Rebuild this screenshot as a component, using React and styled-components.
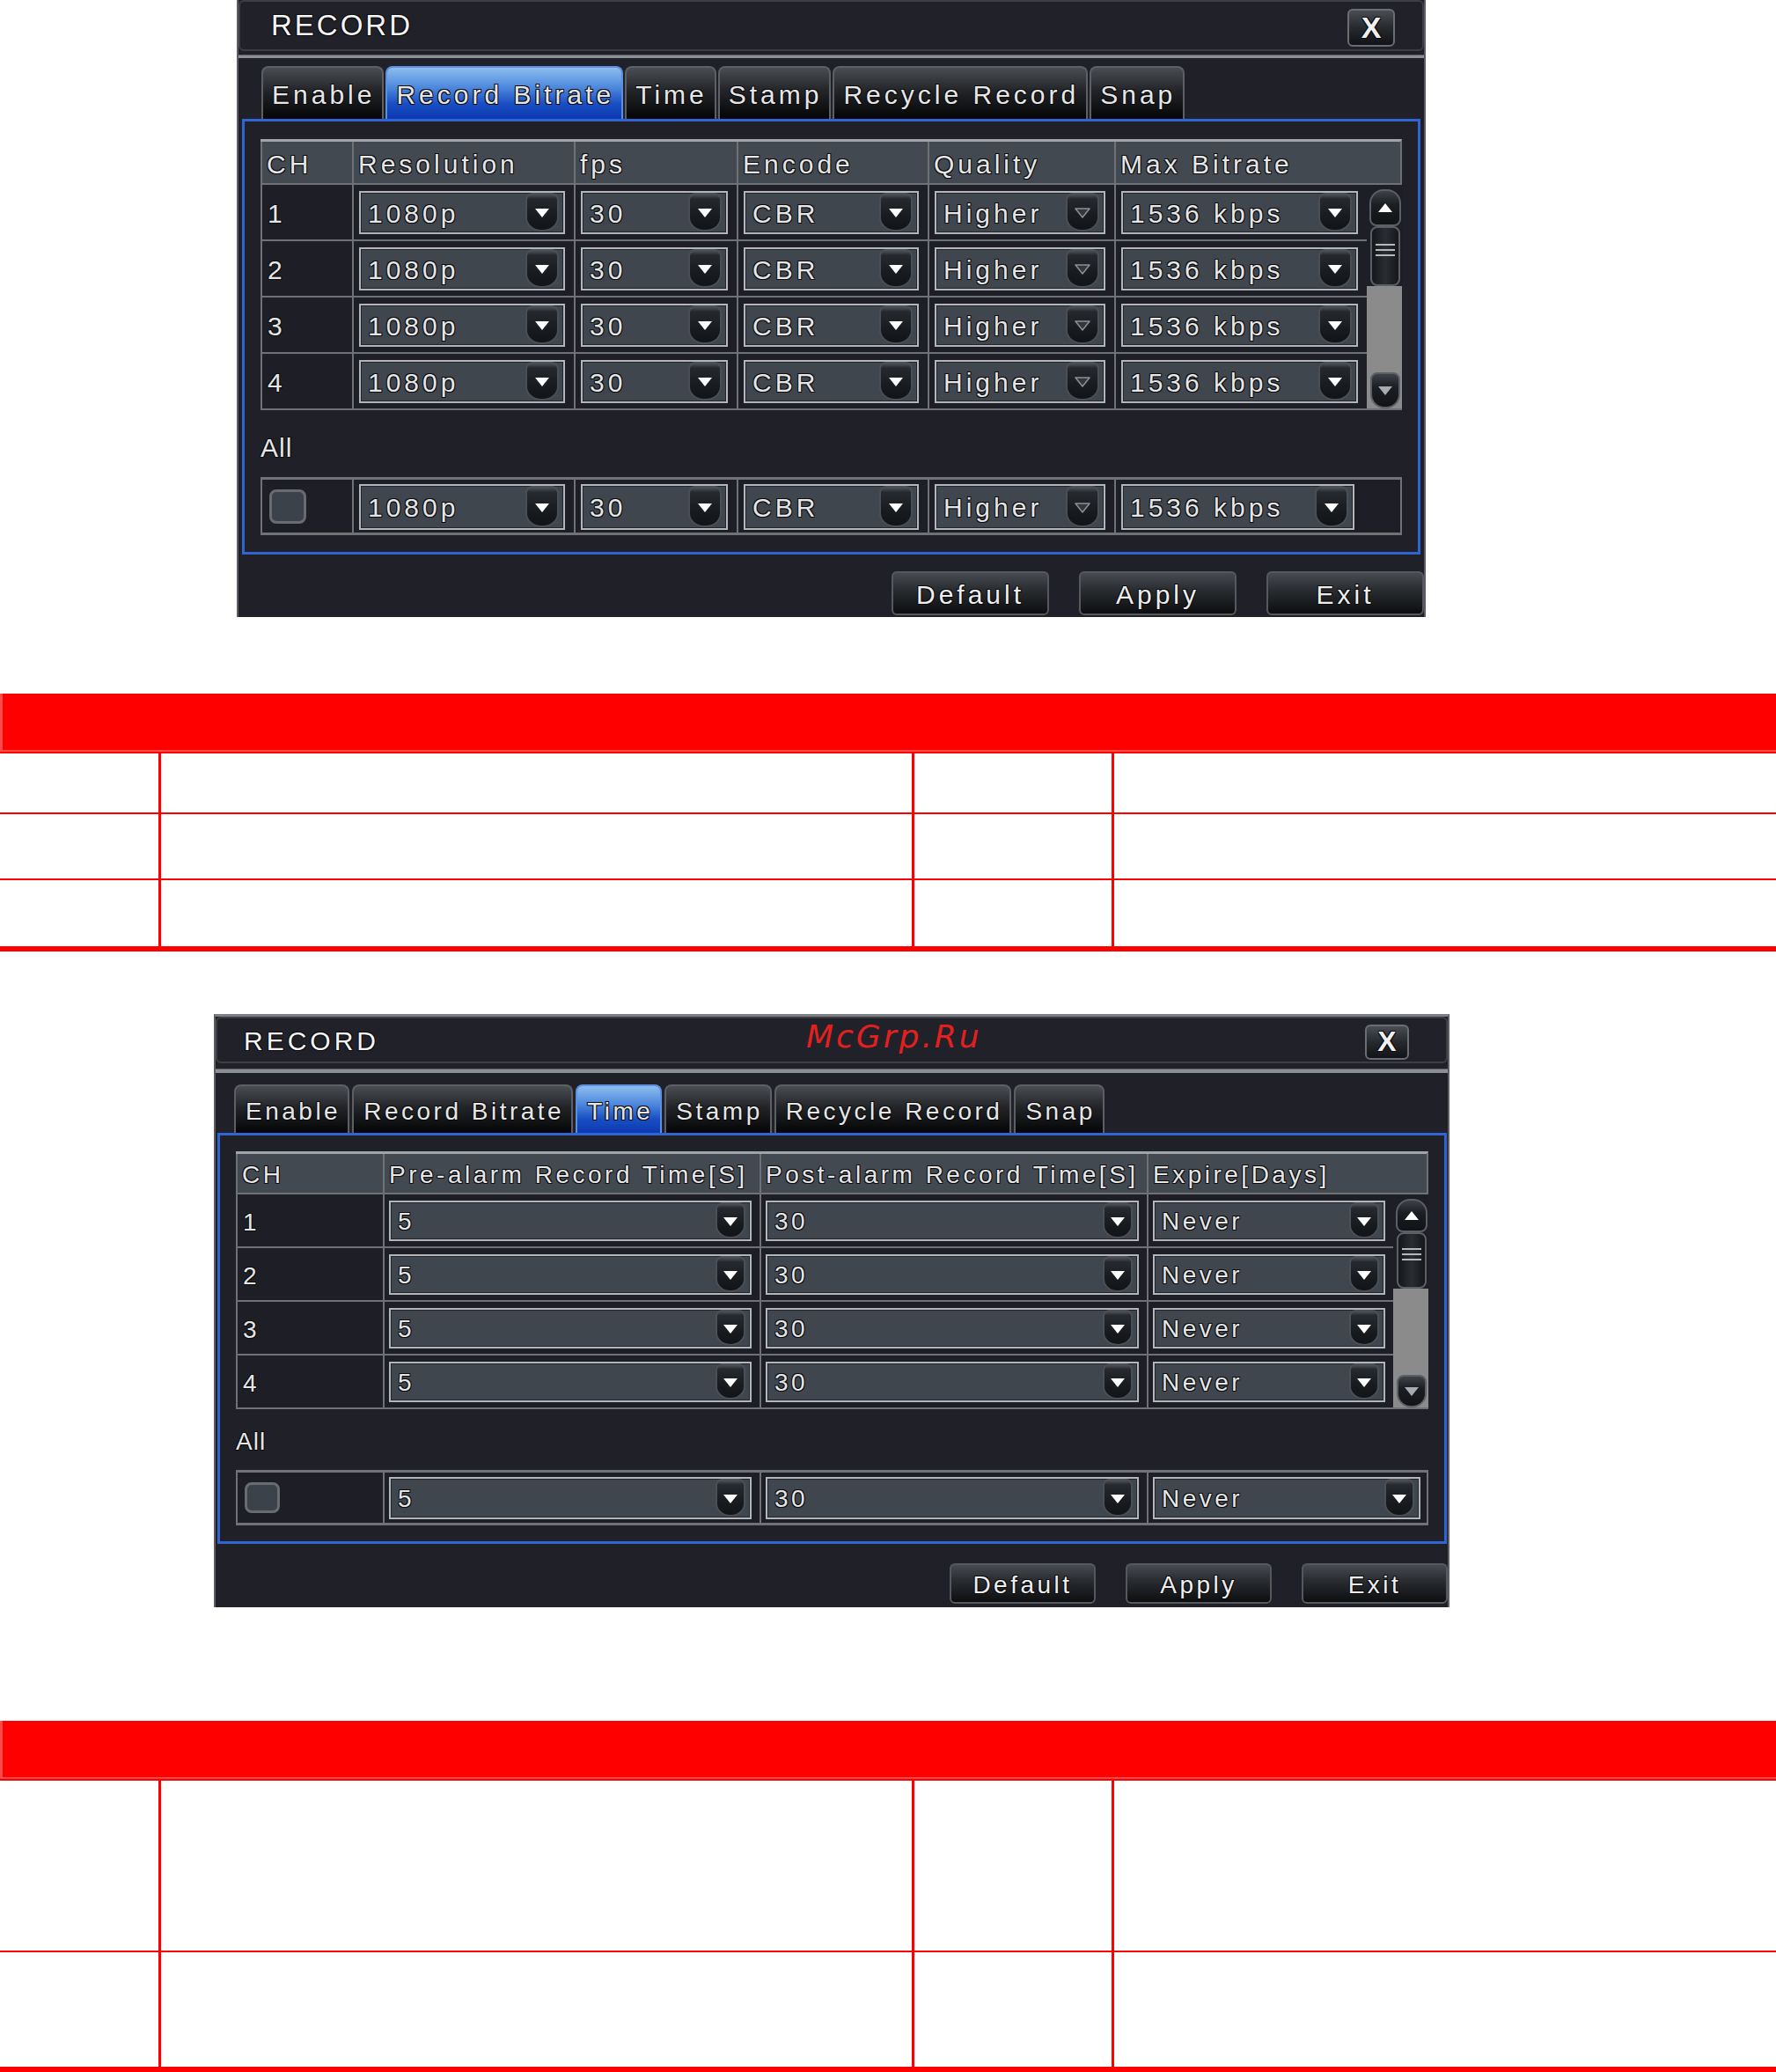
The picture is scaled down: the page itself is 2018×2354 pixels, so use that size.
import React from 'react';
import styled, { createGlobalStyle } from 'styled-components';

const GlobalStyle = createGlobalStyle`
  html, body {
    margin: 0;
    padding: 0;
    background: #ffffff;
  }
  body {
    width: 2018px;
    font-family: "Liberation Sans", Arial, sans-serif;
  }
`;

const D1 = {
  left: 269, width: 1351, height: 701, mt: 0, bt: 0,
  titleH: 58, titleFs: 33, titleLs: 3, titlePad: 35, titlePt: 0,
  closeW: 54, closeH: 43, closeMr: 31, closeFs: 34,
  sepGap: 4, sepH: 4, stripPad: 9, tabPl: 26, tabH: 60, tabPad: '4px 8px 0 10px', tabGap: 2,
  fs: 30, ls: 4,
  frameH: 495, frameMl: 4, frameMr: 4, padT: 20, padX: 18,
  headH: 50, rowH: 64, cols: [104, 252, 185, 217, 212, 327], scrollW: 40,
  cellPad: '7px 10px 6px 6px', allPad: '5px 10px 3px 6px', allLastPr: 54,
  dropW: 38,
  labelMt: 23, labelLh: 40, allMt: 13, allH: 66, chkW: 42, chkH: 39,
  upMt: 5, upH: 42, thumbH: 68, downH: 41,
  footPt: 19, btnW: 179, btnH: 50, btnGap: 34,
};

const D2 = {
  left: 243, width: 1404, height: 674, mt: 71, bt: 3,
  titleH: 53, titleFs: 30, titleLs: 4, titlePad: 30, titlePt: 3,
  closeW: 50, closeH: 40, closeMr: 42, closeFs: 32,
  sepGap: 6, sepH: 5, stripPad: 13, tabPl: 21, tabH: 55, tabPad: '4px 8px 0 11px', tabGap: 3,
  fs: 28, ls: 3.5,
  frameH: 467, frameMl: 2, frameMr: 1, padT: 18, padX: 18,
  headH: 47, rowH: 61, cols: [167, 428, 440, 320], scrollW: 40,
  cellPad: '7px 9px 6px 5px', allPad: '5px 9px 4px 5px', allLastPr: 9,
  dropW: 34,
  labelMt: 18, labelLh: 38, allMt: 13, allH: 63, chkW: 40, chkH: 35,
  upMt: 5, upH: 38, thumbH: 64, downH: 37,
  footPt: 22, btnW: 166, btnH: 46, btnGap: 34,
};

const Page = styled.div`
  width: 2018px;
  display: flex;
  flex-direction: column;
  background: #ffffff;
`;

/* ---------- DVR dialog ---------- */

const Dialog = styled.div`
  position: relative;
  box-sizing: border-box;
  width: ${({ $c }) => $c.width}px;
  height: ${({ $c }) => $c.height}px;
  margin-left: ${({ $c }) => $c.left}px;
  margin-top: ${({ $c }) => $c.mt}px;
  background: #1f2028;
  border-left: 2px solid #5b5d62;
  border-right: 2px solid #5b5d62;
  border-top: ${({ $c }) => $c.bt}px solid #7d8085;
  display: flex;
  flex-direction: column;
  color: #e6e6e6;
  font-family: "Liberation Sans", Arial, sans-serif;
  font-size: ${({ $c }) => $c.fs}px;
  letter-spacing: ${({ $c }) => $c.ls}px;
  text-shadow: -1px -1px 0 #0c0c0e, 1px -1px 0 #0c0c0e, -1px 1px 0 #0c0c0e, 1px 1px 0 #0c0c0e;
`;

const TitleBar = styled.div`
  position: relative;
  box-sizing: border-box;
  height: ${({ $c }) => $c.titleH}px;
  display: flex;
  align-items: center;
  justify-content: space-between;
  padding-left: ${({ $c }) => $c.titlePad}px;
  padding-right: ${({ $c }) => $c.closeMr}px;
  background: #212229;
  border: 2px solid #3c3e44;
  border-radius: 6px;
`;

const TitleText = styled.span`
  font-size: ${({ $c }) => $c.titleFs}px;
  letter-spacing: ${({ $c }) => $c.titleLs}px;
  padding-top: ${({ $c }) => $c.titlePt}px;
  color: #f4f4f4;
`;

const Watermark = styled.span`
  position: absolute;
  left: 669px;
  top: 0;
  font-family: "DejaVu Sans", "Liberation Sans", sans-serif;
  font-style: italic;
  font-size: 36px;
  letter-spacing: 3px;
  color: #e3201f;
  text-shadow: none;
`;

const CloseButton = styled.div`
  box-sizing: border-box;
  width: ${({ $c }) => $c.closeW}px;
  height: ${({ $c }) => $c.closeH}px;
  margin-top: 4px;
  display: flex;
  align-items: center;
  justify-content: center;
  border: 2px solid #6a6d72;
  border-radius: 6px;
  background: linear-gradient(#4a4e54, #26292d 50%, #121316);
  font-size: ${({ $c }) => $c.closeFs}px;
  font-weight: bold;
  letter-spacing: 0;
  color: #f0f0f0;
`;

const Separator = styled.div`
  margin-top: ${({ $c }) => $c.sepGap}px;
  height: ${({ $c }) => $c.sepH}px;
  background: #8a8f94;
  border-top: 1px solid #5c6065;
  box-sizing: border-box;
`;

const TabStrip = styled.div`
  display: flex;
  align-items: flex-end;
  gap: ${({ $c }) => $c.tabGap}px;
  padding-top: ${({ $c }) => $c.stripPad}px;
  padding-left: ${({ $c }) => $c.tabPl}px;
`;

const Tab = styled.div`
  box-sizing: border-box;
  height: ${({ $c }) => $c.tabH}px;
  display: flex;
  align-items: center;
  padding: ${({ $c }) => $c.tabPad};
  border: 2px solid ${({ $active }) => ($active ? '#5d8fdc' : '#5c5f64')};
  border-bottom: none;
  border-radius: 8px 8px 0 0;
  background: ${({ $active }) =>
    $active
      ? 'linear-gradient(#8dbdee, #4b86dc 40%, #1a4fc4 70%, #0c38b0)'
      : 'linear-gradient(#4a4d52, #222428 45%, #050506)'};
  white-space: nowrap;
`;

const Frame = styled.div`
  box-sizing: border-box;
  height: ${({ $c }) => $c.frameH}px;
  margin: 0 ${({ $c }) => $c.frameMr}px 0 ${({ $c }) => $c.frameMl}px;
  border: 3px solid #2f64d2;
  padding: ${({ $c }) => $c.padT}px ${({ $c }) => $c.padX}px 0;
  display: flex;
  flex-direction: column;
`;

/* ---------- settings table ---------- */

const HeaderRow = styled.div`
  box-sizing: border-box;
  height: ${({ $c }) => $c.headH}px;
  display: grid;
  grid-template-columns: ${({ $cols }) => $cols.map((w) => `${w}px`).join(' ')};
  background: #424951;
  border-top: 3px solid #9ea4a9;
  border-right: 2px solid #6f7275;
`;

const HeaderCell = styled.div`
  display: flex;
  align-items: center;
  padding: 4px 0 0 5px;
  border-left: 2px solid #6f7275;
  white-space: nowrap;
  overflow: hidden;
`;

const Body = styled.div`
  display: flex;
  border-bottom: 2px solid #6f7275;
`;

const Rows = styled.div`
  display: flex;
  flex-direction: column;
`;

const Row = styled.div`
  box-sizing: border-box;
  height: ${({ $c }) => $c.rowH}px;
  display: grid;
  grid-template-columns: ${({ $cols }) => $cols.map((w) => `${w}px`).join(' ')};
  border-top: 2px solid #6f7275;
  background: #1e1f26;
`;

const Cell = styled.div`
  box-sizing: border-box;
  border-left: 2px solid #6f7275;
  padding: ${({ $pad }) => $pad};
  padding-right: ${({ $pr }) => ($pr !== undefined ? `${$pr}px` : undefined)};
  display: flex;
  align-items: center;
  min-width: 0;
`;

const ChCell = styled(Cell)`
  padding: 4px 0 0 6px;
`;

const Select = styled.div`
  box-sizing: border-box;
  width: 100%;
  height: 100%;
  display: flex;
  align-items: flex-start;
  justify-content: space-between;
  background: #3f464e;
  border: 2px solid #b3b6b9;
  box-shadow: inset 0 0 0 1px #22252a;
  padding-left: 8px;
  padding-right: 5px;
`;

const SelectText = styled.span`
  align-self: center;
  padding-top: 2px;
  white-space: nowrap;
`;

const DropButton = styled.span`
  box-sizing: border-box;
  width: ${({ $c }) => $c.dropW}px;
  height: calc(100% - 1px);
  display: flex;
  align-items: center;
  justify-content: center;
  padding-top: 2px;
  background: linear-gradient(#4c5157 0%, #262a2f 12%, #181b1f 60%, #121417);
  border: 2px solid #4a4f55;
  border-radius: 8px 8px 18px 18px / 8px 8px 16px 16px;
`;

const TriSvg = styled.svg`
  display: block;
`;

const Triangle = ({ dir = 'down', fill = '#ffffff', stroke = 'none' }) => (
  <TriSvg width="18" height="12" viewBox="0 0 18 12">
    <polygon
      points={dir === 'up' ? '9,1 17,11 1,11' : '1,1 17,1 9,11'}
      fill={fill}
      stroke={stroke}
      strokeWidth="1.5"
      strokeLinejoin="round"
    />
  </TriSvg>
);

const SelectBox = ({ c, value, dim }) => (
  <Select>
    <SelectText>{value}</SelectText>
    <DropButton $c={c}>
      {dim ? <Triangle fill="#33383d" stroke="#8d9094" /> : <Triangle />}
    </DropButton>
  </Select>
);

/* scrollbar */

const ScrollCol = styled.div`
  width: ${({ $c }) => $c.scrollW}px;
  display: flex;
  flex-direction: column;
  border-top: 2px solid #6f7275;
  background: #1e1f26;
`;

const ScrollUp = styled.div`
  box-sizing: border-box;
  width: 36px;
  height: ${({ $c }) => $c.upH}px;
  margin: ${({ $c }) => $c.upMt}px 0 0 3px;
  display: flex;
  align-items: center;
  justify-content: center;
  border: 2px solid #5c6066;
  border-radius: 16px 16px 8px 8px;
  background: linear-gradient(#3e4248, #1b1e22 40%, #111316);
`;

const ScrollThumb = styled.div`
  box-sizing: border-box;
  width: 34px;
  height: ${({ $c }) => $c.thumbH}px;
  margin-left: 4px;
  display: flex;
  flex-direction: column;
  align-items: center;
  justify-content: center;
  gap: 4px;
  padding-bottom: 14px;
  border: 2px solid #5c6066;
  border-radius: 8px;
  background: linear-gradient(90deg, #15171a, #2a2e33 50%, #15171a);
`;

const ThumbLine = styled.span`
  width: 22px;
  height: 2px;
  background: #b6b9bc;
`;

const ScrollTrack = styled.div`
  flex: 1;
  display: flex;
  flex-direction: column;
  justify-content: flex-end;
  background: #8b8b8b;
`;

const ScrollDown = styled.div`
  box-sizing: border-box;
  width: 34px;
  height: ${({ $c }) => $c.downH}px;
  margin-left: 4px;
  display: flex;
  align-items: center;
  justify-content: center;
  border: 2px solid #5c6066;
  border-radius: 8px 8px 16px 16px;
  background: linear-gradient(#3e4248, #1b1e22 40%, #111316);
`;

/* "All" block */

const AllLabel = styled.div`
  margin-top: ${({ $c }) => $c.labelMt}px;
  line-height: ${({ $c }) => $c.labelLh}px;
  letter-spacing: 1px;
`;

const AllRow = styled.div`
  box-sizing: border-box;
  margin-top: ${({ $c }) => $c.allMt}px;
  height: ${({ $c }) => $c.allH}px;
  display: grid;
  grid-template-columns: ${({ $cols }) => $cols.map((w) => `${w}px`).join(' ')};
  background: #1e1f26;
  border-top: 3px solid #707376;
  border-bottom: 3px solid #707376;
  border-right: 2px solid #707376;
`;

const Checkbox = styled.span`
  box-sizing: border-box;
  width: ${({ $c }) => $c.chkW}px;
  height: ${({ $c }) => $c.chkH}px;
  margin-left: 4px;
  border: 3px solid #686c70;
  border-radius: 8px;
  background: #3b4249;
`;

/* footer */

const Footer = styled.div`
  flex: 1;
  display: flex;
  justify-content: flex-end;
  align-items: flex-start;
  gap: ${({ $c }) => $c.btnGap}px;
  padding-top: ${({ $c }) => $c.footPt}px;
`;

const ActionButton = styled.div`
  box-sizing: border-box;
  width: ${({ $c }) => $c.btnW}px;
  height: ${({ $c }) => $c.btnH}px;
  display: flex;
  align-items: center;
  justify-content: center;
  padding-top: 3px;
  border: 2px solid #55595e;
  border-radius: 6px;
  background: linear-gradient(#474b51, #2a2d31 40%, #0d0e10);
  color: #eeeeee;
`;

/* ---------- red description tables ---------- */

const SpecTable = styled.div`
  margin-top: ${({ $mt }) => $mt}px;
  width: 2018px;
  display: grid;
  grid-template-columns: 180px 853px 224px 752px;
  grid-template-rows: ${({ $rows }) => $rows.map((h) => `${h}px`).join(' ')};
  column-gap: 3px;
  row-gap: 2px;
  background: #ff0000;
  border-bottom: 6px solid #ff0000;
`;

const SpecHead = styled.div`
  grid-column: 1 / -1;
  background: #ff0000;
  box-shadow: inset 3px -2px 0 #ff4a4a;
`;

const SpecCell = styled.div`
  background: #ffffff;
`;

const RecordDialog = ({ c, active, headers, values, dims, watermark }) => {
  const bodyCols = [...c.cols.slice(0, -1), c.cols[c.cols.length - 1] - c.scrollW];
  const tabs = ['Enable', 'Record Bitrate', 'Time', 'Stamp', 'Recycle Record', 'Snap'];
  const last = values.length - 1;
  return (
    <Dialog $c={c}>
      <TitleBar $c={c}>
        <TitleText $c={c}>RECORD</TitleText>
        {watermark && <Watermark>McGrp.Ru</Watermark>}
        <CloseButton $c={c}>X</CloseButton>
      </TitleBar>
      <Separator $c={c} />
      <TabStrip $c={c}>
        {tabs.map((t) => (
          <Tab key={t} $c={c} $active={t === active}>
            {t}
          </Tab>
        ))}
      </TabStrip>
      <Frame $c={c}>
        <HeaderRow $c={c} $cols={c.cols}>
          {headers.map((h) => (
            <HeaderCell key={h}>{h}</HeaderCell>
          ))}
        </HeaderRow>
        <Body>
          <Rows>
            {[1, 2, 3, 4].map((n) => (
              <Row key={n} $c={c} $cols={bodyCols}>
                <ChCell>{n}</ChCell>
                {values.map((v, i) => (
                  <Cell key={i} $pad={c.cellPad}>
                    <SelectBox c={c} value={v} dim={dims[i]} />
                  </Cell>
                ))}
              </Row>
            ))}
          </Rows>
          <ScrollCol $c={c}>
            <ScrollUp $c={c}>
              <Triangle dir="up" />
            </ScrollUp>
            <ScrollThumb $c={c}>
              <ThumbLine />
              <ThumbLine />
              <ThumbLine />
            </ScrollThumb>
            <ScrollTrack>
              <ScrollDown $c={c}>
                <Triangle fill="#a9acaf" />
              </ScrollDown>
            </ScrollTrack>
          </ScrollCol>
        </Body>
        <AllLabel $c={c}>All</AllLabel>
        <AllRow $c={c} $cols={c.cols}>
          <Cell $pad="0 0 0 4px">
            <Checkbox $c={c} />
          </Cell>
          {values.map((v, i) => (
            <Cell key={i} $pad={c.allPad} $pr={i === last ? c.allLastPr : undefined}>
              <SelectBox c={c} value={v} dim={dims[i]} />
            </Cell>
          ))}
        </AllRow>
      </Frame>
      <Footer $c={c}>
        <ActionButton $c={c}>Default</ActionButton>
        <ActionButton $c={c}>Apply</ActionButton>
        <ActionButton $c={c}>Exit</ActionButton>
      </Footer>
    </Dialog>
  );
};

const App = () => (
  <Page>
    <GlobalStyle />
    <RecordDialog
      c={D1}
      active="Record Bitrate"
      headers={['CH', 'Resolution', 'fps', 'Encode', 'Quality', 'Max Bitrate']}
      values={['1080p', '30', 'CBR', 'Higher', '1536 kbps']}
      dims={[false, false, false, true, false]}
    />
    <SpecTable $mt={87} $rows={[66, 67, 73, 75]}>
      <SpecHead />
      {Array.from({ length: 12 }).map((_, i) => (
        <SpecCell key={i} />
      ))}
    </SpecTable>
    <RecordDialog
      c={D2}
      active="Time"
      headers={['CH', 'Pre-alarm Record Time[S]', 'Post-alarm Record Time[S]', 'Expire[Days]']}
      values={['5', '30', 'Never']}
      dims={[false, false, false]}
      watermark
    />
    <SpecTable $mt={129} $rows={[66, 193, 130]}>
      <SpecHead />
      {Array.from({ length: 8 }).map((_, i) => (
        <SpecCell key={i} />
      ))}
    </SpecTable>
  </Page>
);

export default App;
